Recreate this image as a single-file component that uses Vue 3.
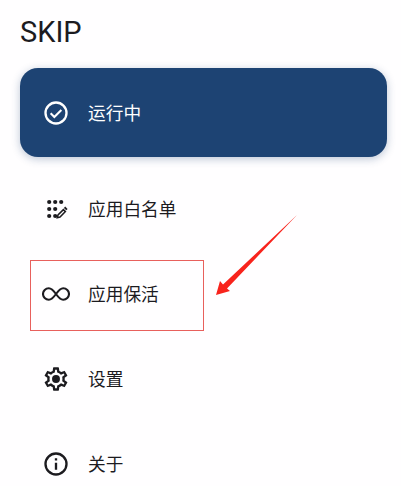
<script setup>
const rows = [
  { label: '应用白名单', icon: 'apps' },
  { label: '应用保活', icon: 'loop' },
  { label: '设置', icon: 'gear' },
  { label: '关于', icon: 'info' }
]
</script>

<template>
  <div class="page">
    <h1 class="title">SKIP</h1>
    <div class="card">
      <svg class="icon" viewBox="0 0 24 24" fill="#fff">
        <path d="M12 2a10 10 0 1 0 0 20 10 10 0 0 0 0-20zm0 18a8 8 0 1 1 0-16 8 8 0 0 1 0 16z" />
        <path d="M7.4 12.2l3.2 3.2 6-6" fill="none" stroke="#fff" stroke-width="1.8" />
      </svg>
      <span class="label">运行中</span>
    </div>
    <div class="list">
      <div v-for="row in rows" :key="row.label" class="row">
        <svg v-if="row.icon === 'apps'" class="icon" viewBox="0 0 28 28" fill="#1c1b1f">
          <circle cx="7.2" cy="7" r="2.1" />
          <circle cx="13.2" cy="7" r="2.1" />
          <circle cx="19.2" cy="7" r="2.1" />
          <circle cx="7.2" cy="14" r="2.1" />
          <circle cx="13.2" cy="14" r="2.1" />
          <circle cx="7.2" cy="21" r="2.1" />
          <circle cx="13.2" cy="21" r="2.1" />
          <path d="M23.2 11.6 25.6 14l-1.3 1.3-2.4-2.4z" />
          <path d="M21.4 14.6 23.4 16.6 18 22l-2.7.7.7-2.7z" fill="none" stroke="#1c1b1f" stroke-width="1.5" />
        </svg>
        <svg v-else-if="row.icon === 'loop'" class="icon wide" viewBox="0 0 28 16" fill="none" stroke="#1c1b1f" stroke-width="2.1">
          <path d="M14 8C11.5 4.5 9.8 2.2 6.8 2.2a5.8 5.8 0 0 0 0 11.6c3 0 4.7-2.3 7.2-5.8s4.2-5.8 7.2-5.8a5.8 5.8 0 0 1 0 11.6c-3 0-4.7-2.3-7.2-5.8z" />
        </svg>
        <svg v-else-if="row.icon === 'gear'" class="icon" viewBox="0 0 24 24" fill="#1c1b1f">
          <path d="M19.43 12.98c.04-.32.07-.64.07-.98s-.03-.66-.07-.98l2.11-1.65c.19-.15.24-.42.12-.64l-2-3.46a.5.5 0 0 0-.61-.22l-2.49 1a7.3 7.3 0 0 0-1.69-.98l-.38-2.65A.49.49 0 0 0 14 2h-4c-.25 0-.46.18-.49.42l-.38 2.65c-.61.25-1.17.59-1.69.98l-2.49-1a.5.5 0 0 0-.61.22l-2 3.46c-.13.22-.07.49.12.64l2.11 1.65c-.04.32-.07.65-.07.98s.03.66.07.98l-2.11 1.65c-.19.15-.24.42-.12.64l2 3.46c.12.22.39.3.61.22l2.49-1c.52.4 1.08.73 1.69.98l.38 2.65c.03.24.24.42.49.42h4c.25 0 .46-.18.49-.42l.38-2.65c.61-.25 1.17-.59 1.69-.98l2.49 1c.23.09.49 0 .61-.22l2-3.46c.12-.22.07-.49-.12-.64l-2.11-1.65zm-1.98-1.71c.04.31.05.52.05.73s-.02.43-.05.73l-.14 1.13.89.7 1.08.84-.7 1.21-1.27-.51-1.04-.42-.9.68c-.43.32-.84.56-1.25.73l-1.06.43-.16 1.13-.2 1.35h-1.4l-.19-1.35-.16-1.13-1.06-.43c-.43-.18-.83-.41-1.23-.71l-.91-.7-1.06.43-1.27.51-.7-1.21 1.08-.84.89-.7-.14-1.13c-.03-.31-.05-.54-.05-.74s.02-.43.05-.73l.14-1.13-.89-.7-1.08-.84.7-1.21 1.27.51 1.04.42.9-.68c.43-.32.84-.56 1.25-.73l1.06-.43.16-1.13.2-1.35h1.39l.19 1.35.16 1.13 1.06.43c.43.18.83.41 1.23.71l.91.7 1.06-.43 1.27-.51.7 1.21-1.07.85-.89.7.14 1.13z" />
          <circle cx="12" cy="12" r="3.4" />
        </svg>
        <svg v-else class="icon" viewBox="0 0 24 24" fill="#1c1b1f">
          <path d="M11 7h2v2h-2zm0 4h2v6h-2zm1-9a10 10 0 1 0 0 20 10 10 0 0 0 0-20zm0 18a8 8 0 1 1 0-16 8 8 0 0 1 0 16z" />
        </svg>
        <span class="label">{{ row.label }}</span>
      </div>
    </div>

    <!-- annotation on top of the screenshot -->
    <div class="mark"></div>
    <svg class="arrow" viewBox="0 0 90 90" fill="#f8231c">
      <path d="M83 0 9 69.5 6 66 2 80 16 76 13 73.5z" />
    </svg>
  </div>
</template>

<style scoped>
.page {
  position: relative;
  width: 401px;
  height: 486px;
  overflow: hidden;
  background: #fffeff;
  color: #1c1b1f;
  font-family: Roboto, "Noto Sans CJK SC", sans-serif;
}

.title {
  margin: 0;
  padding: 15px 0 0 20px;
  height: 68px;
  box-sizing: border-box;
  font-size: 29px;
  line-height: 34px;
  font-weight: 400;
}

.card {
  display: flex;
  align-items: center;
  gap: 18px;
  height: 89px;
  margin: 0 14px 0 20px;
  padding-left: 22px;
  border-radius: 18px;
  background: #1d4373;
  color: #fff;
  box-shadow: 0 2px 8px rgba(29, 67, 115, 0.3);
}

.list {
  padding-top: 9px;
}

.row {
  display: flex;
  align-items: center;
  gap: 18px;
  height: 85px;
  padding-left: 42px;
}

.icon {
  width: 28px;
  height: 28px;
  flex: none;
}

.icon.wide {
  height: 16px;
}

.label {
  margin-bottom: 2px;
  font-family: "Noto Sans CJK SC", sans-serif;
  font-size: 17.7px;
  font-weight: 400;
}

.mark {
  position: absolute;
  left: 30px;
  top: 260px;
  width: 174px;
  height: 71px;
  box-sizing: border-box;
  border: 1.5px solid #e8605c;
}

.arrow {
  position: absolute;
  left: 214px;
  top: 215px;
  width: 90px;
  height: 90px;
}
</style>
